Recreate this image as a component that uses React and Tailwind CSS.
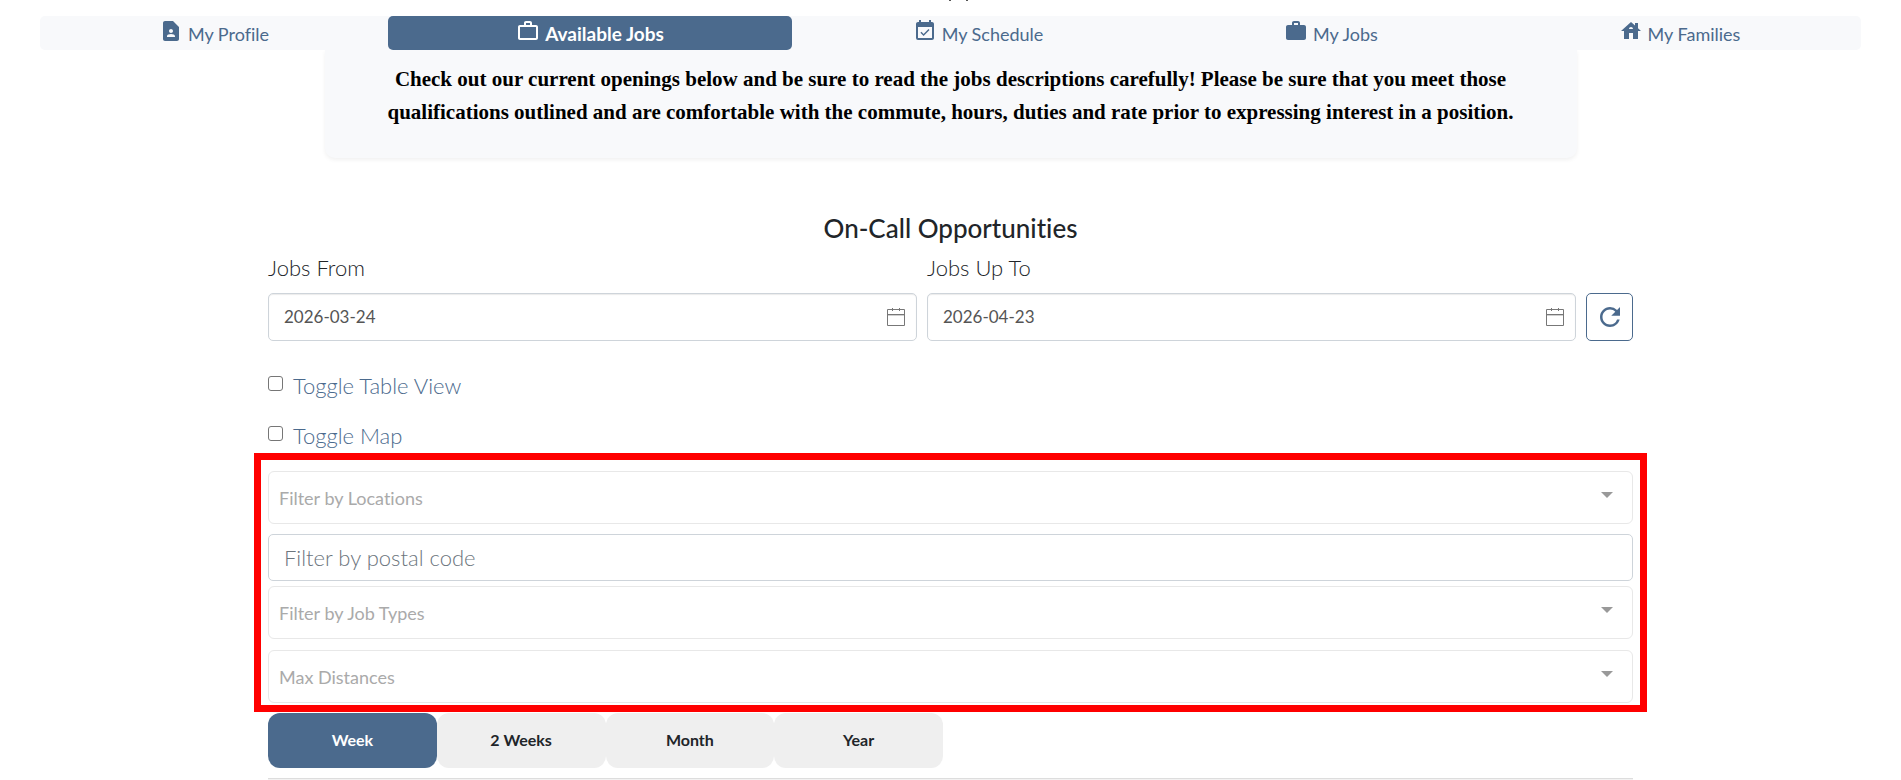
import { MdContactPage, MdWorkOutline, MdEventAvailable, MdWork, MdHouse, MdRefresh } from "react-icons/md";

const tabs = [
  { label: "My Profile", Icon: MdContactPage, grow: "flex-[348_1_0%]" },
  { label: "Available Jobs", Icon: MdWorkOutline, grow: "flex-[404_1_0%]", active: true },
  { label: "My Schedule", Icon: MdEventAvailable, grow: "flex-[372_1_0%]" },
  { label: "My Jobs", Icon: MdWork, grow: "flex-[334_1_0%]" },
  { label: "My Families", Icon: MdHouse, grow: "flex-[363_1_0%]" },
];

function CalendarIcon() {
  return (
    <svg className="pointer-events-none absolute top-[14px] right-[11px] h-5 w-5" viewBox="0 0 20 20" fill="none" stroke="#777" strokeWidth="1" aria-hidden="true">
      <path d="M1.5 2.5h17v16h-17zM1.5 7.5h17M6.5 1v3M13.5 1v3" />
      <path d="M1.5 8.5h17" strokeOpacity="0.35" />
    </svg>
  );
}

function DateField({ id, label, value }) {
  return (
    <div className="flex flex-1 flex-col">
      <label htmlFor={id} className="text-[22px] leading-[30px] font-light text-[#212529]">{label}</label>
      <div className="relative mt-[10px]">
        <input id={id} type="text" defaultValue={value} className="h-12 w-full rounded-[5px] border border-[#ced4da] bg-white px-[15px] pb-[2px] text-[17px] text-[#555] shadow-[inset_0_1px_1px_rgba(0,0,0,0.08)] outline-none" />
        <CalendarIcon />
      </div>
    </div>
  );
}

function Toggle({ id, label }) {
  return (
    <div className="flex h-[50px] items-center gap-[10px]">
      <input id={id} type="checkbox" className="mb-[6px] h-[15px] w-[15px] appearance-none rounded-[3px] border border-[#767676] bg-white checked:bg-[#4b6a8d]" />
      <label htmlFor={id} className="text-[22px] leading-[30px] font-light text-[#4b6a8d]">{label}</label>
    </div>
  );
}

function Filter({ label }) {
  return (
    <div className="relative">
      <select aria-label={label} defaultValue="" className="block h-[53px] w-full appearance-none rounded-md border border-[#e8e8e8] bg-white px-[10px] text-lg text-[#aaa] outline-none">
        <option value="">{label}</option>
      </select>
      <svg className="pointer-events-none absolute top-[21px] right-5 h-[6px] w-3" viewBox="0 0 12 6" aria-hidden="true">
        <path d="M0 0h12L6 6z" fill="#999" />
      </svg>
    </div>
  );
}

export default function App() {
  return (
    <div className="min-h-screen overflow-hidden bg-white font-['Lato',sans-serif] [font-variant-ligatures:none]">
      <header className="flex h-4 justify-center gap-[15px] pl-4">
        <span className="h-px w-[2px] bg-[#555]" />
        <span className="h-px w-[2px] bg-[#555]" />
      </header>
      <nav className="relative z-10 mx-10 flex rounded-[5px] bg-[#f8f9fb]">
        {tabs.map(({ label, Icon, grow, active }) => (
          <a key={label} href="#" className={`${grow} flex h-[34px] justify-center gap-[5px] rounded-[5px] ${active ? "bg-[#4b6a8d] text-[19px] font-bold text-white" : "text-lg text-[#4b6a8d]"}`}>
            <Icon className="mt-[3px] h-6 w-6" />
            <span className="leading-[36px]">{label}</span>
          </a>
        ))}
      </nav>

      <section className="mx-auto w-[1252px] max-w-full rounded-b-[10px] bg-[#f8f9fb] px-12 pt-[13px] pb-[29px] text-center shadow-[0_2px_4px_rgba(0,0,0,0.06)]">
        <p className="font-['Liberation_Serif',serif] text-[21px] leading-[33px] font-bold text-black">
          Check out our current openings below and be sure to read the jobs descriptions carefully! Please be sure that you meet those qualifications outlined and are comfortable with the commute, hours, duties and rate prior to expressing interest in a position.
        </p>
      </section>

      <main className="mx-auto w-[1365px] max-w-full pt-[55px]">
        <h2 className="text-center text-[26px] leading-[30px] font-medium text-[#212529]">On-Call Opportunities</h2>
        <div className="mt-[10px] flex items-end gap-[10px]">
          <DateField id="from" label="Jobs From" value="2026-03-24" />
          <DateField id="to" label="Jobs Up To" value="2026-04-23" />
          <button type="button" aria-label="Refresh" className="flex h-12 w-[47px] items-center justify-center rounded-[5px] border border-[#4b6a8d] text-[#4b6a8d]">
            <MdRefresh className="h-[30px] w-[30px]" />
          </button>
        </div>

        <div className="mt-5">
          <Toggle id="table" label="Toggle Table View" />
          <Toggle id="map" label="Toggle Map" />
        </div>

        <div className="-mx-[14px] -mt-2 border-7 border-[#ff0000] px-[7px] pt-[11px] pb-[2px]">
          <Filter label="Filter by Locations" />
          <input aria-label="Filter by postal code" placeholder="Filter by postal code" className="mt-[10px] mb-[5px] block h-[47px] w-full rounded-[5px] border border-[#ced4da] px-[15px] text-[22px] font-light outline-none placeholder:text-[#6c757d]" />
          <div className="flex flex-col gap-[11px]">
            <Filter label="Filter by Job Types" />
            <Filter label="Max Distances" />
          </div>
        </div>

        <div className="mt-px grid w-[675px] max-w-full grid-cols-4">
          {["Week", "2 Weeks", "Month", "Year"].map((label, i) => (
            <button key={label} type="button" className={`h-[55px] rounded-xl pb-[2px] text-base font-bold ${i === 0 ? "bg-[#4b6a8d] text-white" : "bg-[#efefef] text-[#212529]"}`}>{label}</button>
          ))}
        </div>
        <div className="mt-[10px] h-[2px] border-t border-[#ddd] bg-[#f2f2f2]" />
      </main>
    </div>
  );
}
